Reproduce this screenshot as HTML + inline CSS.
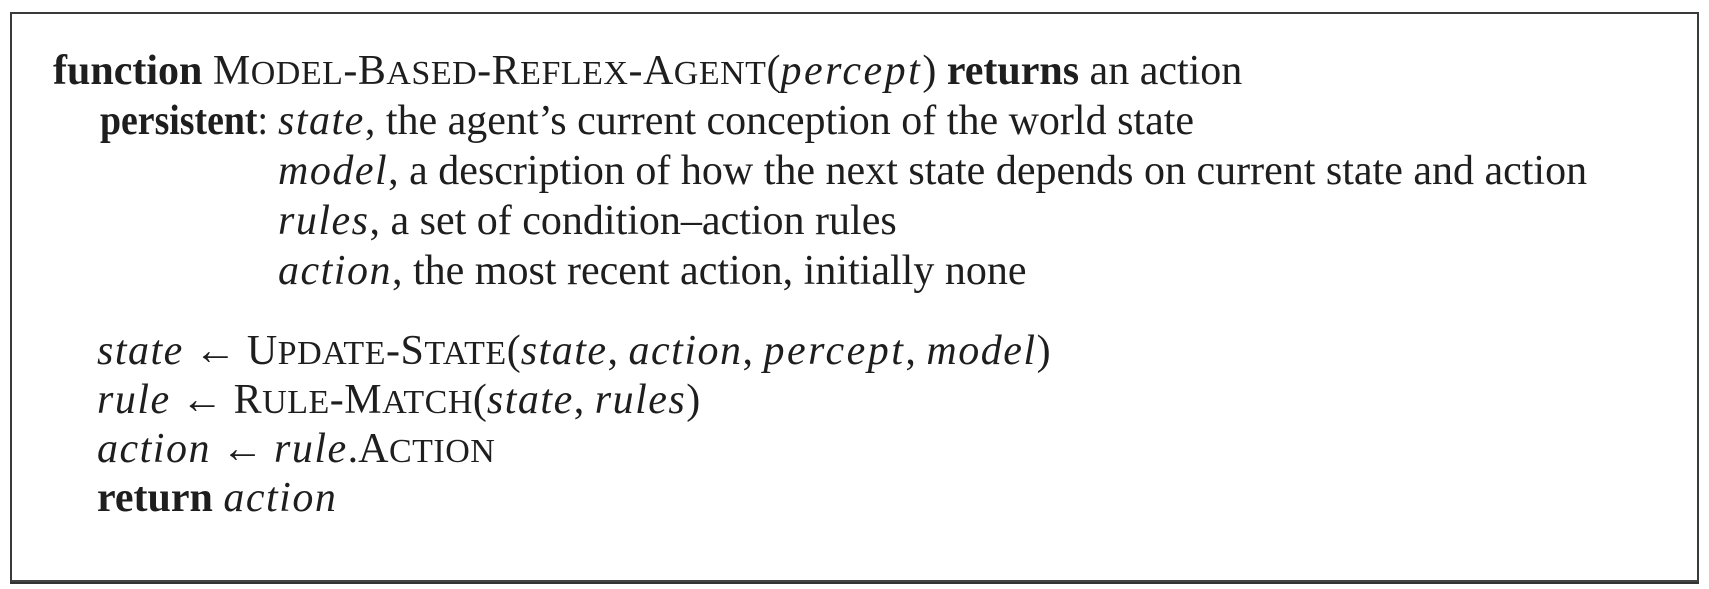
<!DOCTYPE html>
<html><head><meta charset="utf-8"><style>
html,body{margin:0;padding:0;background:#fff;}
body{width:1709px;height:589px;position:relative;overflow:hidden;font-family:"Liberation Serif",serif;color:#1e1e1e;}
.box{position:absolute;left:10px;top:12px;width:1685px;height:566px;border:2px solid #3a3a3a;border-bottom:2px solid #444;}
.b2{position:absolute;left:10px;top:582px;width:1689px;height:2px;background:#333;}
.l{position:absolute;font-size:42px;line-height:50px;white-space:nowrap;}
b{font-weight:bold;}
i{font-style:italic;letter-spacing:1.5px;}
i.w{letter-spacing:2.5px;}
small{font-size:34px;}
.sc{letter-spacing:0.5px;}
</style></head><body>
<div class="box"></div>
<div class="b2"></div>
<div class="l" style="left:53px;top:46px"><b>function</b> <span class="sc">M<small>ODEL</small>-B<small>ASED</small>-R<small>EFLEX</small>-A<small>GENT</small></span>(<i class="w">percept</i>) <b>returns</b> an action</div>
<div class="l" style="left:100px;top:96px;transform:scaleX(0.9);transform-origin:0 0"><b>persistent</b>:</div>
<div class="l" style="left:278px;top:96px"><i>state</i>, the agent’s current conception of the world state</div>
<div class="l" style="left:278px;top:146px"><i>model</i>, a description of how the next state depends on current state and action</div>
<div class="l" style="left:278px;top:196px"><i>rules</i>, a set of condition–action rules</div>
<div class="l" style="left:278px;top:246px"><i>action</i>, the most recent action, initially none</div>
<div class="l" style="left:97px;top:326px"><i>state</i> ← <span class="sc">U<small>PDATE</small>-S<small>TATE</small></span>(<i>state</i>, <i>action</i>, <i class="w">percept</i>, <i>model</i>)</div>
<div class="l" style="left:97px;top:375px"><i>rule</i> ← <span class="sc">R<small>ULE</small>-M<small>ATCH</small></span>(<i>state</i>, <i>rules</i>)</div>
<div class="l" style="left:97px;top:424px"><i>action</i> ← <i>rule</i>.<span class="sc">A<small>CTION</small></span></div>
<div class="l" style="left:97px;top:473px"><b>return</b> <i>action</i></div>
</body></html>
